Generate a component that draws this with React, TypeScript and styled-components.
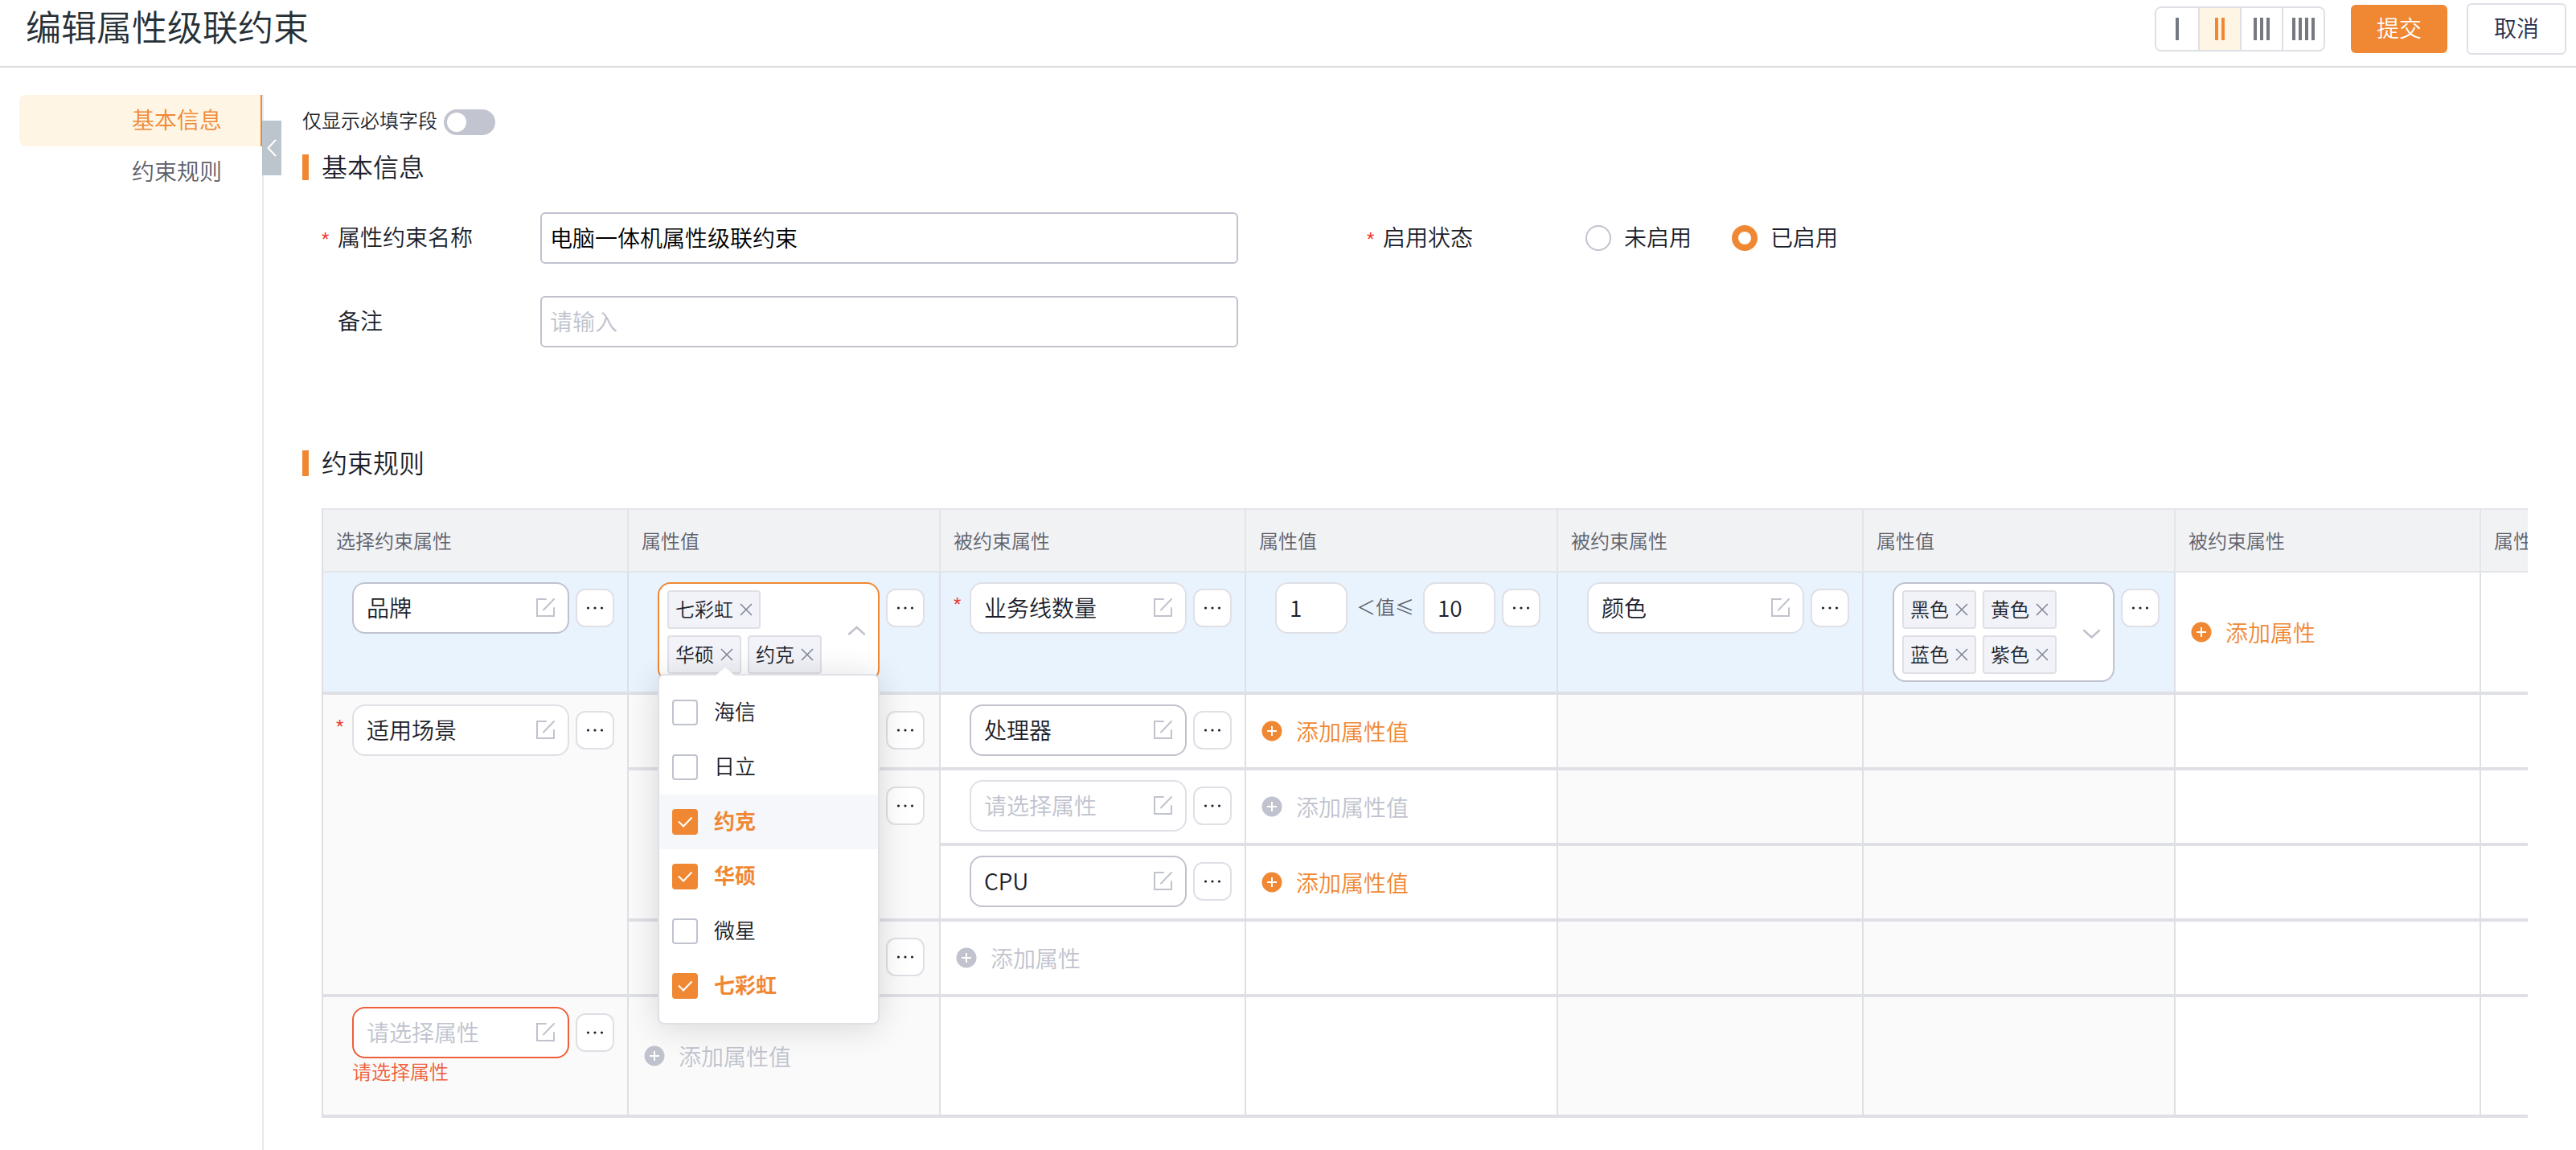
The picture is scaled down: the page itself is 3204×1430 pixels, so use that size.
import React, { useState } from "react";
import styled, { createGlobalStyle, css } from "styled-components";

const color = {
  brand: "#f08833",
  brandSoft: "#fef5e5",
  danger: "#ee5f3b",
  required: "#f0342a",
  text: "#1c1f2b",
  muted: "#5d606a",
  faint: "#c0c3ce",
  line: "#dfe0e6",
  headLine: "#e4e5e9",
  stripe: "#fafafa",
  info: "#e8f3fe",
};

const GlobalStyle = createGlobalStyle`
  *, *::before, *::after { box-sizing: border-box; }
  body { margin: 0; background: #fff; }
  body, button, input {
    font-family: "Noto Sans CJK SC", "Noto Sans", sans-serif;
    font-size: 28px;
    font-weight: 350;
    line-height: 40px;
    color: ${color.text};
  }
  button { border: 0; padding: 0; background: none; cursor: pointer; }
  svg { display: block; flex: none; }
`;

const Page = styled.div`
  display: flex;
  flex-direction: column;
  min-height: 100vh;
  overflow: hidden;
`;

const Header = styled.header`
  display: flex;
  align-items: center;
  gap: 24px;
  padding: 4px 12px 14px 32px;
  border-bottom: 2px solid #dcdcdc;
`;

const Title = styled.h1`
  flex: 1;
  margin: 0;
  padding-bottom: 8px;
  font-size: 44px;
  line-height: 56px;
  font-weight: 350;
  color: #263036;
`;

const Segments = styled.div`
  display: flex;
  margin-right: 8px;
  border: 2px solid ${color.line};
  border-radius: 8px;
  overflow: hidden;
`;

const Segment = styled.button<{ $active?: boolean }>`
  display: flex;
  align-items: center;
  justify-content: center;
  gap: 4px;
  width: 52px;
  height: 52px;
  color: ${(p) => (p.$active ? color.brand : "#747881")};
  background: ${(p) => (p.$active ? color.brandSoft : "#fff")};
  & + & { border-left: 2px solid ${color.line}; }
`;

const Bar = styled.span`
  width: 4px;
  height: 28px;
  background: currentColor;
`;

const SubmitButton = styled.button`
  width: 120px;
  height: 60px;
  padding-bottom: 4px;
  border-radius: 6px;
  background: ${color.brand};
  color: #fff;
`;

const CancelButton = styled.button`
  width: 124px;
  height: 64px;
  padding-bottom: 4px;
  border: 2px solid ${color.line};
  border-radius: 6px;
  background: #fff;
  color: #2a2f4a;
`;

const Body = styled.div`
  flex: 1;
  display: flex;
  padding-top: 34px;
`;

const Sidebar = styled.nav`
  position: relative;
  flex: none;
  display: flex;
  flex-direction: column;
  width: 328px;
  padding-left: 24px;
  border-right: 2px solid #e8e9ef;
`;

const SideLink = styled.a<{ $active?: boolean }>`
  height: 64px;
  padding: 10px 48px 14px 0;
  text-align: right;
  text-decoration: none;
  border-right: 2px solid ${(p) => (p.$active ? color.brand : "transparent")};
  border-radius: 8px 0 0 8px;
  color: ${(p) => (p.$active ? color.brand : color.muted)};
  background: ${(p) => (p.$active ? color.brandSoft : "transparent")};
`;

const CollapseHandle = styled.button`
  position: absolute;
  top: 32px;
  left: 100%;
  display: flex;
  align-items: center;
  justify-content: center;
  width: 24px;
  height: 68px;
  background: #bcc5cc;
`;

const Main = styled.main`
  flex: 1;
  min-width: 0;
  padding: 18px 60px 40px 48px;
`;

const SwitchLabel = styled.label`
  display: flex;
  align-items: center;
  gap: 8px;
  width: fit-content;
  height: 32px;
  font-size: 24px;
  line-height: 32px;
`;

const SwitchText = styled.span`
  padding-bottom: 6px;
`;

const Switch = styled.input`
  appearance: none;
  width: 64px;
  height: 32px;
  margin: 0;
  padding: 4px;
  border-radius: 16px;
  background: #c2c4cf;
  &::before {
    content: "";
    display: block;
    width: 24px;
    height: 24px;
    border-radius: 50%;
    background: #fff;
  }
  &:checked { background: ${color.brand}; }
  &:checked::before { margin-left: 32px; }
`;

const SectionTitle = styled.h2`
  display: flex;
  align-items: flex-start;
  gap: 16px;
  margin: 0 0 40px;
  font-size: 32px;
  line-height: 28px;
  font-weight: 350;
  &::before {
    content: "";
    width: 8px;
    height: 32px;
    background: ${color.brand};
  }
`;

const Section = styled.section`
  margin-top: 24px;
  & + & { margin-top: 128px; }
`;

const FormGrid = styled.div`
  display: grid;
  grid-template-columns: repeat(2, minmax(0, 1140px));
  gap: 40px 160px;
  padding-left: 24px;
`;

const Field = styled.div`
  display: flex;
  align-items: center;
  min-height: 64px;
`;

const FieldLabel = styled.label`
  display: flex;
  flex: none;
  width: 272px;
  padding-bottom: 4px;
`;

const Star = styled.span`
  flex: none;
  width: 20px;
  padding-top: 8px;
  line-height: 32px;
  font-family: "Liberation Sans", sans-serif;
  font-size: 24px;
  color: ${color.required};
`;

const TextInput = styled.input`
  flex: 1;
  min-width: 0;
  height: 64px;
  padding: 0 10px 2px;
  border: 2px solid ${color.faint};
  border-radius: 6px;
  color: #000;
  outline: none;
  &::placeholder { color: ${color.faint}; opacity: 1; }
`;

const RadioGroup = styled.div`
  display: flex;
  gap: 50px;
`;

const RadioLabel = styled.label`
  display: flex;
  align-items: center;
  gap: 16px;
`;

const Radio = styled.input`
  appearance: none;
  width: 32px;
  height: 32px;
  margin: 0;
  border: 2px solid ${color.faint};
  border-radius: 50%;
  background: #fff;
  &:checked { border: 8px solid ${color.brand}; }
`;

const LabelText = styled.span`
  padding-bottom: 4px;
`;

const TableScroll = styled.div`
  margin-left: 24px;
  overflow: hidden;
`;

const Table = styled.table`
  table-layout: fixed;
  width: 3074px;
  border-collapse: separate;
  border-spacing: 0;
  border-left: 2px solid ${color.line};
`;

const Col = styled.col<{ $wide?: boolean }>`
  width: ${(p) => (p.$wide ? 388 : 380)}px;
`;

const Th = styled.th`
  height: 80px;
  padding: 0 16px;
  border: solid ${color.headLine};
  border-width: 2px 2px 2px 0;
  background: #f1f2f4;
  font-size: 24px;
  line-height: 36px;
  font-weight: 350;
  text-align: left;
  color: ${color.muted};
`;

type Tone = "plain" | "stripe" | "info";

const Td = styled.td<{ $tone?: Tone; $size?: "md" | "lg"; $middle?: boolean; $wide?: boolean }>`
  position: relative;
  height: ${(p) => (p.$size === "lg" ? 152 : p.$size === "md" ? 150 : 94)}px;
  padding: ${(p) => (p.$middle ? "0 18px" : p.$wide ? "12px 18px 0 16px" : "12px 16px 0")};
  vertical-align: ${(p) => (p.$middle ? "middle" : "top")};
  border: solid ${color.line};
  border-width: 0 2px 4px 0;
  background: ${(p) =>
    p.$tone === "info" ? color.info : p.$tone === "stripe" ? color.stripe : "#fff"};
`;

const CellRow = styled.div`
  display: flex;
  gap: 8px;
`;

const Lead = styled.span`
  flex: none;
  width: 20px;
  margin-right: -8px;
  padding-top: 8px;
  font-family: "Liberation Sans", sans-serif;
  font-size: 24px;
  color: ${color.required};
`;

type Edge = "soft" | "strong" | "error" | "focus";
const edgeColor: Record<Edge, string> = {
  soft: color.line,
  strong: color.faint,
  error: color.danger,
  focus: color.brand,
};

const boxStyle = css<{ $edge: Edge }>`
  border: 2px solid ${(p) => edgeColor[p.$edge]};
  border-radius: 16px;
  background: #fff;
`;

const PickerBox = styled.div<{ $edge: Edge }>`
  ${boxStyle}
  flex: 1;
  min-width: 0;
  display: flex;
  align-items: center;
  height: 64px;
  padding: 0 16px;
`;

const BareInput = styled.input`
  flex: 1;
  min-width: 0;
  width: 100%;
  height: 60px;
  padding: 0 0 2px;
  border: 0;
  outline: none;
  background: none;
  &::placeholder { color: ${color.faint}; opacity: 1; }
`;

const NumberInput = styled.input<{ $edge: Edge }>`
  ${boxStyle}
  width: 90px;
  height: 64px;
  padding: 0 16px 2px;
  outline: none;
`;

const Between = styled.span`
  padding: 12px 3px;
  font-size: 24px;
  line-height: 36px;
  color: ${color.muted};
  white-space: nowrap;
`;

const MoreButton = styled.button`
  flex: none;
  display: flex;
  align-items: center;
  justify-content: center;
  width: 48px;
  height: 48px;
  margin-top: 8px;
  border: 2px solid ${color.line};
  border-radius: 12px;
  background: #fff;
`;

const ErrorText = styled.div`
  padding-left: 20px;
  font-size: 24px;
  line-height: 32px;
  color: ${color.danger};
`;

const TagSelectBox = styled.div<{ $edge: Edge }>`
  ${boxStyle}
  flex: 1;
  display: flex;
  align-items: center;
  min-width: 0;
  padding: 8px 14px 8px 10px;
`;

const TagList = styled.div`
  flex: 1;
  display: flex;
  flex-wrap: wrap;
  gap: 8px;
  padding-right: 24px;
`;

const Tag = styled.span`
  display: flex;
  align-items: center;
  gap: 8px;
  height: 48px;
  padding: 0 8px;
  border: 2px solid ${color.line};
  border-radius: 4px;
  background: #f2f3f9;
  font-size: 24px;
  line-height: 40px;
`;

const TagText = styled.span`
  padding-bottom: 2px;
`;

const AddButton = styled.button<{ $muted?: boolean }>`
  display: flex;
  align-items: center;
  gap: 16px;
  color: ${(p) => (p.$muted ? color.faint : color.brand)};
`;

const Dropdown = styled.div`
  position: absolute;
  z-index: 2;
  top: 126px;
  left: 36px;
  width: 276px;
  padding: 12px 0;
  border: 2px solid ${color.line};
  border-radius: 8px;
  background: #fff;
  box-shadow: 0 4px 40px rgba(0, 0, 0, 0.14);
  &::before {
    content: "";
    position: absolute;
    top: -10px;
    left: 70px;
    border: solid transparent;
    border-width: 0 12px 10px;
    border-bottom-color: #fff;
  }
`;

const Option = styled.label<{ $hover?: boolean; $checked?: boolean }>`
  display: flex;
  align-items: center;
  gap: 20px;
  height: 68px;
  padding: 0 16px;
  font-size: 26px;
  font-weight: ${(p) => (p.$checked ? 700 : 350)};
  color: ${(p) => (p.$checked ? color.brand : color.text)};
  background: ${(p) => (p.$hover ? "#f5f7fb" : "transparent")};
`;

const CheckSlot = styled.span`
  display: grid;
  flex: none;
  width: 32px;
  height: 32px;
  color: #fff;
  & > * { grid-area: 1 / 1; }
  & > svg { pointer-events: none; }
`;

const Check = styled.input`
  appearance: none;
  width: 32px;
  height: 32px;
  margin: 0;
  border: 2px solid ${color.faint};
  border-radius: 4px;
  background: #fff;
  &:checked { border-color: ${color.brand}; background: ${color.brand}; }
`;

const EditIcon = () => (
  <svg width="24" height="24" viewBox="0 0 24 24" fill="none" stroke={color.faint} strokeWidth="2" strokeLinecap="round">
    <path d="M13 1H2v21h21V12M10 14.500L23 1" />
  </svg>
);

const CloseIcon = () => (
  <svg width="16" height="16" viewBox="0 0 16 16" fill="none" stroke="#7d8494" strokeWidth="1.500">
    <path d="M1 1l14 14M15 1L1 15" />
  </svg>
);

const Chevron = ({ up }: { up?: boolean }) => (
  <svg width="24" height="24" viewBox="0 0 24 24" fill="none" stroke={color.faint} strokeWidth="2.500" strokeLinecap="round">
    <path d={up ? "M2 14.500L11.500 6l9.500 8.500" : "M2 10L11.500 18.500l9.500-8.500"} />
  </svg>
);

const DotsIcon = () => (
  <svg width="24" height="24" viewBox="0 0 24 24" fill={color.text}>
    <circle cx="3.500" cy="12" r="1.600" />
    <circle cx="12" cy="12" r="1.600" />
    <circle cx="20.500" cy="12" r="1.600" />
  </svg>
);

const PlusIcon = () => (
  <svg width="28" height="28" viewBox="0 0 28 28">
    <circle cx="14" cy="14" r="12.500" fill="currentColor" />
    <path d="M14 8v12M8 14h12" stroke="#fff" strokeWidth="2" />
  </svg>
);

const CheckIcon = () => (
  <svg width="32" height="32" viewBox="0 0 32 32" fill="none" stroke="currentColor" strokeWidth="2">
    <path d="M8 15.500l6 6L24.500 10.500" />
  </svg>
);

const More = () => (
  <MoreButton type="button" aria-label="更多">
    <DotsIcon />
  </MoreButton>
);

function Picker({ value, edge = "soft", required, error }: {
  value?: string;
  edge?: Edge;
  required?: boolean;
  error?: string;
}) {
  return (
    <>
      <CellRow>
        <Lead>{required ? "*" : null}</Lead>
        <PickerBox $edge={edge}>
          <BareInput aria-label="属性" defaultValue={value} placeholder="请选择属性" />
          <EditIcon />
        </PickerBox>
        <More />
      </CellRow>
      {error ? <ErrorText>{error}</ErrorText> : null}
    </>
  );
}

function TagSelect({ tags, open }: { tags: string[]; open?: boolean }) {
  return (
    <CellRow>
      <Lead />
      <TagSelectBox $edge={open ? "focus" : "strong"}>
        <TagList>
          {tags.map((t) => (
            <Tag key={t}>
              <TagText>{t}</TagText>
              <button type="button" aria-label={"移除" + t}>
                <CloseIcon />
              </button>
            </Tag>
          ))}
        </TagList>
        <Chevron up={open} />
      </TagSelectBox>
      <More />
    </CellRow>
  );
}

const Add = ({ children, muted }: { children: string; muted?: boolean }) => (
  <AddButton type="button" $muted={muted} disabled={muted}>
    <PlusIcon />
    <span>{children}</span>
  </AddButton>
);

const brands = ["海信", "日立", "约克", "华硕", "微星", "七彩虹"];

function BrandDropdown() {
  const [picked, setPicked] = useState(["约克", "华硕", "七彩虹"]);
  const toggle = (b: string) =>
    setPicked((p) => (p.includes(b) ? p.filter((x) => x !== b) : [...p, b]));
  return (
    <Dropdown>
      {brands.map((b) => (
        <Option key={b} $checked={picked.includes(b)} $hover={b === "约克"}>
          <CheckSlot>
            <Check type="checkbox" checked={picked.includes(b)} onChange={() => toggle(b)} />
            {picked.includes(b) ? <CheckIcon /> : null}
          </CheckSlot>
          <LabelText>{b}</LabelText>
        </Option>
      ))}
    </Dropdown>
  );
}

const TailCells = ({ size }: { size?: "md" | "lg" }) => (
  <>
    <Td $tone="stripe" $size={size} />
    <Td $tone="stripe" $size={size} />
    <Td $size={size} />
    <Td $size={size} />
  </>
);

const headings = ["选择约束属性", "属性值", "被约束属性", "属性值", "被约束属性", "属性值", "被约束属性", "属性值"];

export default function App() {
  const [columns, setColumns] = useState(2);
  const [status, setStatus] = useState("已启用");

  return (
    <Page>
      <GlobalStyle />
      <Header>
        <Title>编辑属性级联约束</Title>
        <Segments>
          {[1, 2, 3, 4].map((n) => (
            <Segment key={n} type="button" aria-label={n + "列"} $active={n === columns} onClick={() => setColumns(n)}>
              {Array.from({ length: n }, (_, i) => (
                <Bar key={i} />
              ))}
            </Segment>
          ))}
        </Segments>
        <SubmitButton type="submit">提交</SubmitButton>
        <CancelButton type="button">取消</CancelButton>
      </Header>

      <Body>
        <Sidebar>
          <SideLink href="#basic" $active>基本信息</SideLink>
          <SideLink href="#rules">约束规则</SideLink>
          <CollapseHandle type="button" aria-label="收起">
            <svg width="12" height="22" viewBox="0 0 12 22" fill="none" stroke="#fff" strokeWidth="2">
              <path d="M11 1L1.500 11L11 21" />
            </svg>
          </CollapseHandle>
        </Sidebar>

        <Main>
          <SwitchLabel>
            <SwitchText>仅显示必填字段</SwitchText>
            <Switch type="checkbox" role="switch" />
          </SwitchLabel>

          <Section id="basic">
            <SectionTitle>基本信息</SectionTitle>
            <FormGrid>
              <Field>
                <FieldLabel htmlFor="name">
                  <Star>*</Star>属性约束名称
                </FieldLabel>
                <TextInput id="name" defaultValue="电脑一体机属性级联约束" />
              </Field>
              <Field>
                <FieldLabel as="span">
                  <Star>*</Star>启用状态
                </FieldLabel>
                <RadioGroup role="radiogroup" aria-label="启用状态">
                  {["未启用", "已启用"].map((s) => (
                    <RadioLabel key={s}>
                      <Radio type="radio" name="status" checked={status === s} onChange={() => setStatus(s)} />
                      <LabelText>{s}</LabelText>
                    </RadioLabel>
                  ))}
                </RadioGroup>
              </Field>
              <Field>
                <FieldLabel htmlFor="remark">
                  <Star />备注
                </FieldLabel>
                <TextInput id="remark" placeholder="请输入" />
              </Field>
            </FormGrid>
          </Section>

          <Section id="rules">
            <SectionTitle>约束规则</SectionTitle>
            <TableScroll>
              <Table>
                <colgroup>
                  {headings.map((_, i) => (
                    <Col key={i} $wide={i % 2 === 1} />
                  ))}
                </colgroup>
                <thead>
                  <tr>
                    {headings.map((h, i) => (
                      <Th key={i}>{h}</Th>
                    ))}
                  </tr>
                </thead>
                <tbody>
                  <tr>
                    <Td $tone="info" $size="lg"><Picker value="品牌" edge="strong" /></Td>
                    <Td $tone="info" $size="lg" $wide>
                      <TagSelect tags={["七彩虹", "华硕", "约克"]} open />
                      <BrandDropdown />
                    </Td>
                    <Td $tone="info" $size="lg"><Picker value="业务线数量" required /></Td>
                    <Td $tone="info" $size="lg" $wide>
                      <CellRow>
                        <Lead />
                        <NumberInput $edge="soft" aria-label="最小值" defaultValue="1" />
                        <Between>＜值≤</Between>
                        <NumberInput $edge="soft" aria-label="最大值" defaultValue="10" />
                        <More />
                      </CellRow>
                    </Td>
                    <Td $tone="info" $size="lg"><Picker value="颜色" /></Td>
                    <Td $tone="info" $size="lg" $wide>
                      <TagSelect tags={["黑色", "黄色", "蓝色", "紫色"]} />
                    </Td>
                    <Td $size="lg" $middle><Add>添加属性</Add></Td>
                    <Td $size="lg" />
                  </tr>
                  <tr>
                    <Td $tone="stripe" rowSpan={4}><Picker value="适用场景" required /></Td>
                    <Td $tone="stripe" $wide><Picker /></Td>
                    <Td><Picker value="处理器" edge="strong" /></Td>
                    <Td $middle><Add>添加属性值</Add></Td>
                    <TailCells />
                  </tr>
                  <tr>
                    <Td $tone="stripe" $wide rowSpan={2}><Picker /></Td>
                    <Td><Picker /></Td>
                    <Td $middle><Add muted>添加属性值</Add></Td>
                    <TailCells />
                  </tr>
                  <tr>
                    <Td><Picker value="CPU" edge="strong" /></Td>
                    <Td $middle><Add>添加属性值</Add></Td>
                    <TailCells />
                  </tr>
                  <tr>
                    <Td $tone="stripe" $wide><Picker /></Td>
                    <Td $middle><Add muted>添加属性</Add></Td>
                    <Td />
                    <TailCells />
                  </tr>
                  <tr>
                    <Td $tone="stripe" $size="md"><Picker edge="error" error="请选择属性" /></Td>
                    <Td $tone="stripe" $size="md" $middle><Add muted>添加属性值</Add></Td>
                    <Td $size="md" />
                    <Td $size="md" />
                    <TailCells size="md" />
                  </tr>
                </tbody>
              </Table>
            </TableScroll>
          </Section>
        </Main>
      </Body>
    </Page>
  );
}
